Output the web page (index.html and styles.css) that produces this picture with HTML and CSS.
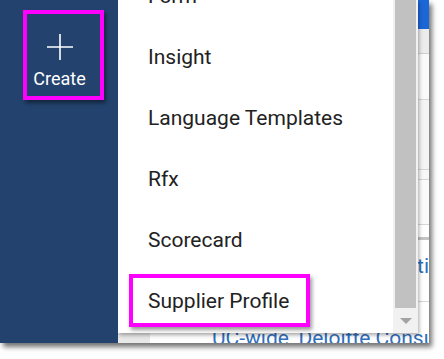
FILE: index.html
```html
<!DOCTYPE html>
<html>
<head>
<meta charset="utf-8">
<link rel="stylesheet" href="styles.css">
</head>
<body>
<div class="shot">
  <aside class="sidebar">
    <div class="create">
      <svg class="plus" width="28" height="28" viewBox="0 0 28 28"><path d="M14 1V27M1 14H27" stroke="#fff" stroke-width="1.6" fill="none"/></svg>
      <span class="create-label">Create</span>
    </div>
  </aside>
  <main class="main">
    <div class="page">
      <div class="topbar"></div>
      <div class="toolbar"></div>
      <div class="row r1"></div>
      <div class="row r2"></div>
      <div class="row r3"></div>
      <div class="row r4"></div>
      <div class="divider"></div>
      <div class="row r5"><span class="link ti">Consultati</span></div>
      <div class="row r6"></div>
      <div class="bottom">
        <div class="gutter"></div>
        <div class="link-row"><span class="link">UC-wide_Deloitte Consulting</span></div>
      </div>
    </div>
    <div class="menu">
      <ul class="items">
        <li class="item">Form</li>
        <li class="item">Insight</li>
        <li class="item">Language Templates</li>
        <li class="item">Rfx</li>
        <li class="item">Scorecard</li>
        <li class="item"><span class="hl">Supplier Profile</span></li>
      </ul>
      <div class="scrollbar">
        <div class="thumb"></div>
        <div class="arrow"></div>
      </div>
    </div>
  </main>
</div>
</body>
</html>
```
FILE: styles.css
```css
* { box-sizing: border-box; }
html, body { margin: 0; padding: 0; background: #fff; }
body { width: 444px; height: 359px; overflow: hidden; font-family: Roboto, "Liberation Sans", sans-serif; }

.shot {
  width: 429px;
  height: 343px;
  display: flex;
  overflow: hidden;
  box-shadow: 3px 4px 5px rgba(0,0,0,0.55);
}

.sidebar {
  width: 118px;
  flex: none;
  background: #23436e;
  padding: 10px 0 0 23px;
}

.create {
  width: 81px;
  height: 90px;
  border: 4px solid #ff00ff;
  box-shadow: 2px 3px 4px rgba(0,0,0,0.45);
  display: flex;
  flex-direction: column;
  align-items: center;
  padding: 19px 8px 0 0;
}
.plus { display: block; }
.create-label {
  color: #fff;
  font-size: 18px;
  line-height: 18px;
  margin-top: 9px;
}

.main {
  flex: 1;
  position: relative;
  overflow: hidden;
}

.page { display: flex; flex-direction: column; height: 100%; }
.topbar { height: 29px; background: #1b67d8; flex: none; }
.toolbar { height: 25px; background: #ececec; border-bottom: 1px solid #cfcfcf; flex: none; }
.row { border-bottom: 1px solid #d6d6d6; background: #f7f7f7; flex: none; }
.r1 { height: 46px; background: #fafafa; }
.r2 { height: 70px; background: #f4f4f4; }
.r3 { height: 10px; }
.r4 { height: 45px; background: #fafafa; }
.divider { height: 3px; background: #c4c4c4; flex: none; margin-top: 12px; }
.r5 { height: 62px; background: #fff; position: relative; }
.r6 { height: 30px; background: #fff; border-bottom: none; }
.ti {
  position: absolute;
  right: 0;
  top: 14px;
}
.link { color: #2f6fc0; font-size: 21px; white-space: nowrap; }

.bottom { flex: 1; display: flex; }
.gutter { width: 32px; background: #e8e8e8; }
.link-row { flex: 1; background: #fff; padding-left: 62px; overflow: hidden; }
.link-row .link { display: block; margin-top: -6px; }

.menu {
  position: absolute;
  left: 0;
  top: 0;
  width: 300px;
  height: 333px;
  background: #fff;
  box-shadow: 1px 2px 4px rgba(0,0,0,0.35);
  display: flex;
}

.items {
  list-style: none;
  margin: -34px 0 0 0;
  padding: 0;
  flex: 1;
}
.item {
  height: 61px;
  line-height: 61px;
  padding-left: 30px;
  font-size: 21px;
  color: #222;
  position: relative;
}
.hl {
  position: relative;
}
.hl::before {
  content: "";
  position: absolute;
  left: -19px;
  right: -21px;
  top: -15px;
  bottom: -14px;
  border: 4px solid #ff00ff;
  box-shadow: 2px 3px 4px rgba(0,0,0,0.4);
}

.scrollbar {
  width: 25px;
  flex: none;
  background: #f1f1f1;
  display: flex;
  flex-direction: column;
  align-items: center;
  padding: 0 2px;
}
.thumb { width: 21px; height: 308px; background: #c1c1c1; }
.arrow {
  margin-top: 10px;
  width: 0; height: 0;
  border-left: 6px solid transparent;
  border-right: 6px solid transparent;
  border-top: 6px solid #a3a3a3;
}
```
